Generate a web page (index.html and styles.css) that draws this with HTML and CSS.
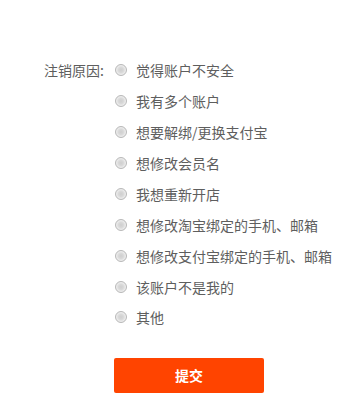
FILE: index.html
```html
<!DOCTYPE html>
<html lang="zh-CN">
<head>
<meta charset="utf-8">
<title>注销原因</title>
<link rel="stylesheet" href="styles.css">
</head>
<body>
<form class="form">
  <div class="form-row">
    <div class="label">注销原因:</div>
    <ul class="options">
      <li class="option"><span class="radio"></span><span class="text">觉得账户不安全</span></li>
      <li class="option"><span class="radio"></span><span class="text">我有多个账户</span></li>
      <li class="option"><span class="radio"></span><span class="text">想要解绑/更换支付宝</span></li>
      <li class="option"><span class="radio"></span><span class="text">想修改会员名</span></li>
      <li class="option"><span class="radio"></span><span class="text">我想重新开店</span></li>
      <li class="option"><span class="radio"></span><span class="text">想修改淘宝绑定的手机、邮箱</span></li>
      <li class="option"><span class="radio"></span><span class="text">想修改支付宝绑定的手机、邮箱</span></li>
      <li class="option"><span class="radio"></span><span class="text">该账户不是我的</span></li>
      <li class="option"><span class="radio"></span><span class="text">其他</span></li>
    </ul>
  </div>
  <div class="actions">
    <button type="button" class="submit">提交</button>
  </div>
</form>
</body>
</html>
```
FILE: styles.css
```css
html, body {
  margin: 0;
  padding: 0;
  background: #fff;
}
body {
  font-family: "Noto Sans CJK SC", "Noto Sans", "Liberation Sans", sans-serif;
  font-size: 14px;
  color: #5e5e5e;
}
.form {
  padding-top: 55px;
}
.form-row {
  display: flex;
  align-items: flex-start;
}
.label {
  width: 104px;
  text-align: right;
  line-height: 31px;
  height: 31px;
}
.options {
  list-style: none;
  margin: 0 0 0 11px;
  padding: 0;
}
.option {
  display: flex;
  align-items: center;
  height: 30.875px;
  gap: 9px;
}
.radio {
  box-sizing: border-box;
  width: 12px;
  height: 12px;
  border-radius: 50%;
  border: 1px solid #b8b8b8;
  background: radial-gradient(circle at 50% 50%, #cfcfcf 0, #d8d8d8 35%, #ececec 65%, #e2e2e2 100%);
  flex: none;
}
.text {
  line-height: 20px;
  white-space: nowrap;
}
.actions {
  padding-left: 114px;
  margin-top: 25px;
}
.submit {
  width: 150px;
  height: 35px;
  border: 0;
  border-radius: 2px;
  background: #ff4400;
  color: #fff;
  font-family: "Noto Sans CJK SC", "Noto Sans", sans-serif;
  font-size: 14px;
  font-weight: bold;
  padding: 0;
}
```
